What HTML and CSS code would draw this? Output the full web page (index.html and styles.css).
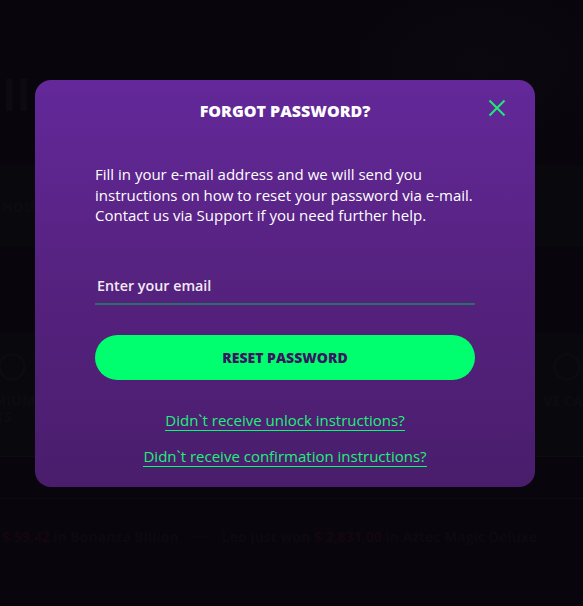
FILE: index.html
```html
<!DOCTYPE html>
<html lang="en">
<head>
<meta charset="utf-8">
<title>Forgot password</title>
<link rel="stylesheet" href="styles.css">
</head>
<body>
<div class="page">
  <section class="hero">
    <div class="hero-title">II</div>
    <div class="hero-art"></div>
  </section>
  <section class="promo">
    <div class="promo-text">HOURLY</div>
  </section>
  <div class="spacer"></div>
  <section class="features">
    <div class="feature feature-left">
      <div class="feature-icon"></div>
      <div class="feature-label">IMIUM<br>ETS</div>
    </div>
    <div class="feature feature-right">
      <div class="feature-icon"></div>
      <div class="feature-label">VE CAS</div>
    </div>
  </section>
  <div class="divider"></div>
  <div class="ticker">
    <span class="amt">$ 59.42</span> in Bonanza Billion <span class="dots">····</span> Leo just won <span class="amt">$ 2,831.00</span> in Aztec Magic Deluxe
  </div>
</div>

<div class="modal" role="dialog" aria-labelledby="fp-title">
  <button class="close" aria-label="Close">
    <svg width="18" height="18" viewBox="0 0 18 18"><path d="M1.5 1.5 L16.5 16.5 M16.5 1.5 L1.5 16.5" stroke="#1ee97a" stroke-width="2" fill="none"/></svg>
  </button>
  <h2 id="fp-title" class="modal-title">FORGOT PASSWORD?</h2>
  <p class="modal-text">Fill in your e-mail address and we will send you instructions on how to reset your password via e-mail. Contact us via Support if you need further help.</p>
  <div class="field">
    <span class="field-label">Enter your email</span>
  </div>
  <button class="btn-reset">RESET PASSWORD</button>
  <div class="links">
    <a class="link" href="#">Didn`t receive unlock instructions?</a>
    <a class="link" href="#">Didn`t receive confirmation instructions?</a>
  </div>
</div>
</body>
</html>
```
FILE: styles.css
```css
* { box-sizing: border-box; }
html, body { margin: 0; padding: 0; }
body {
  background: #08050d;
  font-family: "Open Sans", "Noto Sans", sans-serif;
  width: 583px;
  height: 606px;
  overflow: hidden;
  position: relative;
}
.page { display: flex; flex-direction: column; }
.hero { height: 165px; display: flex; align-items: flex-start; justify-content: space-between; }
.hero-title { margin-top: 66px; margin-left: 2px; font-size: 44px; font-weight: 700; color: #0c0b0f; line-height: 56px; }
.hero-art { width: 260px; height: 160px; border-radius: 0 0 0 80px; background: radial-gradient(ellipse at 60% 40%, #0b0810 0%, #08050d 70%); }
.promo { height: 82px; background: #09080d; display: flex; align-items: center; }
.promo-text { margin-left: 2px; font-size: 14px; font-weight: 800; color: #0c0b0f; }
.spacer { height: 86px; }
.features { height: 124px; background: #09080d; display: flex; justify-content: space-between; border-bottom: 1px solid #0d0c11; }
.feature { display: flex; flex-direction: column; align-items: center; padding-top: 20px; gap: 12px; }
.feature-left { margin-left: -12px; }
.feature-right { margin-right: -8px; }
.feature-icon { width: 28px; height: 28px; border-radius: 50%; border: 3px solid #0c0b10; }
.feature-label { font-size: 14px; font-weight: 800; color: #0c0b10; line-height: 16px; }
.divider { height: 42px; border-bottom: 1px solid #0c0b10; }
.ticker { padding-top: 28px; margin-left: 2px; white-space: nowrap; font-size: 14px; font-weight: 700; color: #0c0a0f; }
.ticker .amt { color: #13070c; }
.ticker .dots { color: #0c0a0f; margin: 0 10px; }

.modal {
  position: absolute;
  left: 35px;
  top: 80px;
  width: 500px;
  height: 407px;
  border-radius: 16px;
  background: linear-gradient(180deg, #64289a 0%, #55227f 50%, #4a1d6c 100%);
  padding: 20px 60px 20px;
  display: flex;
  flex-direction: column;
  color: #fff;
}
.close {
  position: absolute;
  right: 29px;
  top: 19px;
  width: 18px;
  height: 18px;
  padding: 0;
  border: 0;
  background: none;
  display: flex;
}
.modal-title {
  margin: 0;
  text-align: center;
  font-size: 16px;
  line-height: 22px;
  font-weight: 800;
  color: #fff;
}
.modal-text {
  margin: 42px 0 0;
  font-size: 15px;
  line-height: 20.5px;
  color: #fff;
}
.field {
  margin-top: 49px;
  padding: 0 2px 7px;
  border-bottom: 2px solid #2a6e68;
  line-height: 20px;
}
.field-label { font-size: 14.3px; font-weight: 600; color: #f3e9f5; }
.btn-reset {
  margin-top: 30.5px;
  height: 46px;
  border: 0;
  border-radius: 23px;
  background: #00ff6e;
  color: #3a1560;
  font-family: inherit;
  font-size: 14px;
  font-weight: 800;
}
.links {
  margin-top: 30px;
  display: flex;
  flex-direction: column;
  align-items: center;
  gap: 15px;
}
.link {
  font-size: 15px;
  line-height: 20px;
  color: #1ef07a;
  text-decoration: none;
  border-bottom: 1px solid #00ff6e;
}
```
